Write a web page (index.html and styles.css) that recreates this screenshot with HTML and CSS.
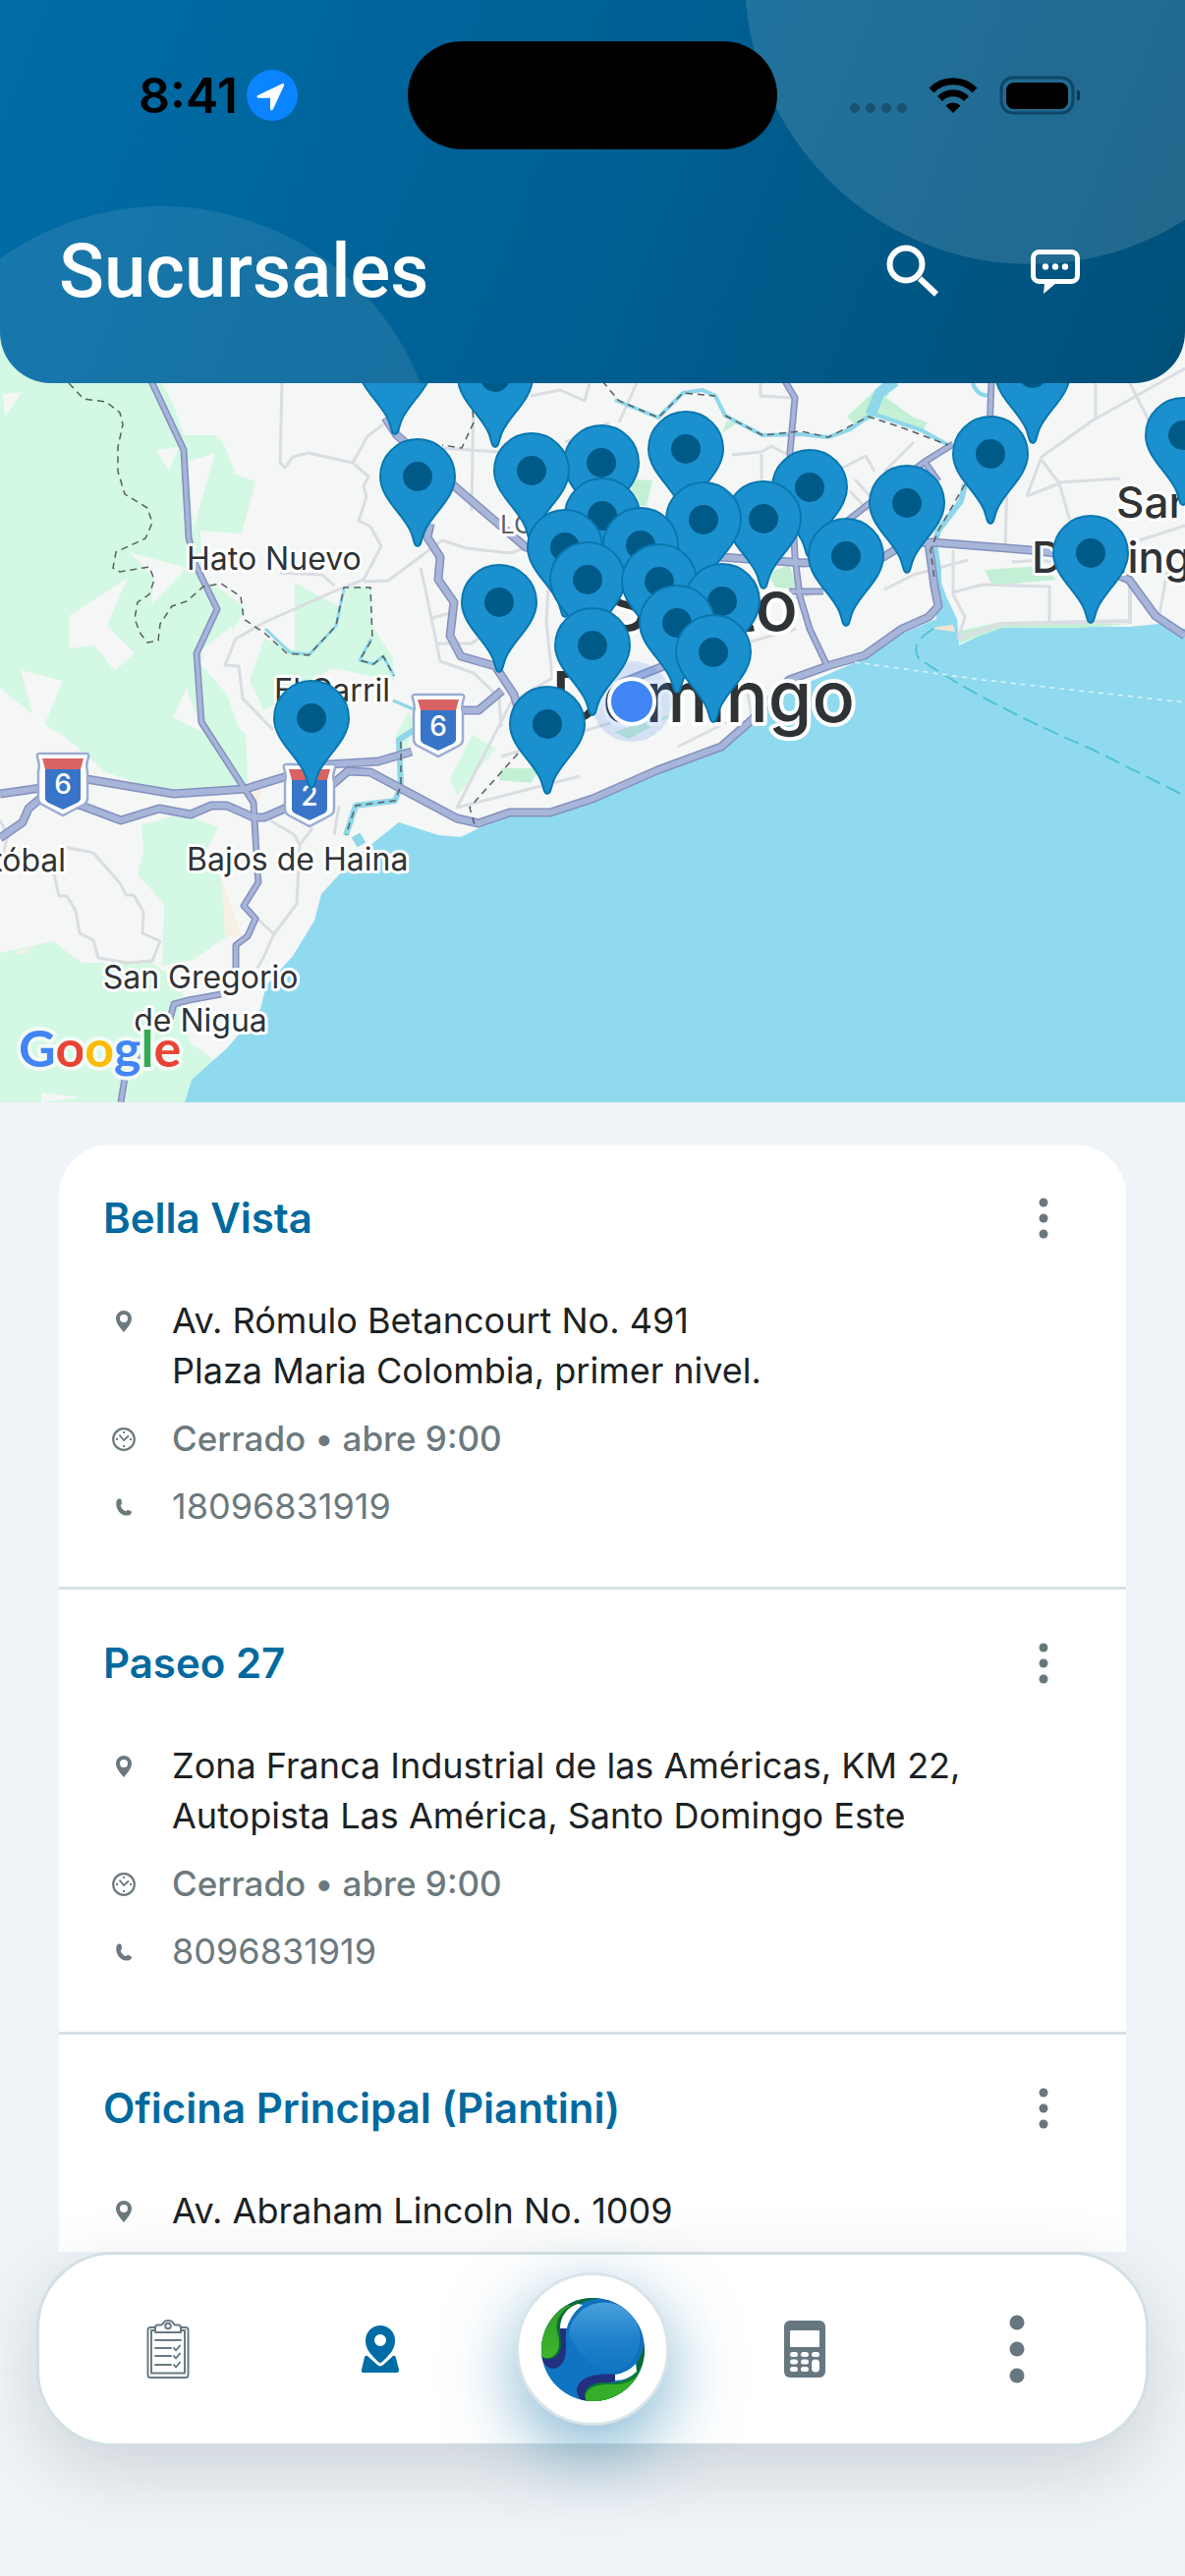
FILE: index.html
```html
<!DOCTYPE html>
<html lang="es">
<head>
<meta charset="utf-8">
<meta name="viewport" content="width=device-width, initial-scale=1">
<title>Sucursales</title>
<link rel="stylesheet" href="styles.css">
</head>
<body>
<svg class="sprite" aria-hidden="true">
  <defs>
    <symbol id="i-pin" viewBox="0 0 16 22"><path fill-rule="evenodd" d="M8 0a8 8 0 0 1 8 8c0 5-4 9-8 14C4 17 0 13 0 8a8 8 0 0 1 8-8zm0 4a4 4 0 1 0 0 8 4 4 0 0 0 0-8z"/></symbol>
    <symbol id="i-clock" viewBox="0 0 24 24"><circle cx="12" cy="12" r="10.8" fill="none" stroke="currentColor" stroke-width="2.2"/><path d="M7.5 7.500l4.500 5.500 5-4.500M12 4v2M12 18v2M4 12h2M18 12h2" fill="none" stroke="currentColor" stroke-width="1.900"/></symbol>
    <symbol id="i-phone" viewBox="0 0 16 18"><path d="M1 2C2 0 5 0 5.500 1.500L6 5C6 6.500 4.500 6.800 4.800 8c1 2.600 2.600 4 4.600 5 1.200.5 1.600-1.200 3-1l2.800 1c1.500 1 .3 3.500-1.700 4.300C9 18.500 4 16 2 12 0 8.500-.3 4.500 1 2z"/></symbol>
    <symbol id="i-more" viewBox="0 0 10 42"><circle cx="5" cy="5" r="4.500"/><circle cx="5" cy="21" r="4.500"/><circle cx="5" cy="37" r="4.500"/></symbol>
    <g id="marker"><path d="M0 71C-4 71-4 62-7 56-15 38-38 22-38 0a38 38 0 0 1 76 0C38 22 15 38 7 56 4 62 4 71 0 71z" fill="#1b90cf" stroke="#0877ae" stroke-width="2"/><circle r="15" fill="#005a88"/></g>
    <g id="shield"><path d="M-24-31h48q3 0 2 4-3 8-1 14V14q0 5-4 7L0 32-21 21q-4-2-4-7v-27q2-6-1-14-1-4 2-4z" fill="#fff" stroke="#9badd3" stroke-width="2.500"/><path d="M-21-26h42l-3 11h-36z" fill="#d96363"/><path d="M-18-15h36v30q0 2-3 4L0 26l-15-7q-3-2-3-4z" fill="#3875c8"/></g>
  </defs>
</svg>

<div class="app">
  <header class="header">
    <svg class="header-art" viewBox="0 0 1206 390" preserveAspectRatio="xMaxYMin slice" aria-hidden="true">
      <circle cx="1050" cy="-23" r="292" fill="#fff" opacity=".13"/>
      <circle cx="165" cy="492" r="282" fill="#fff" opacity=".09"/>
    </svg>
    <div class="status">
      <div class="status-left">
        <span class="time">8:41</span>
        <svg width="52" height="52" viewBox="0 0 52 52" aria-hidden="true"><circle cx="26" cy="26" r="26" fill="#0a84ff"/><path d="M11.500 26L36 14.200q3-1 2 2L27 40q-2 3-3-.5V28.700H12q-3-1-.5-2.700z" fill="#fff"/></svg>
      </div>
      <div class="island"></div>
      <div class="status-right">
        <svg width="236" height="46" viewBox="0 0 236 46" aria-hidden="true">
          <g opacity=".25"><circle cx="7" cy="36" r="5"/><circle cx="23" cy="36" r="5"/><circle cx="39" cy="36" r="5"/><circle cx="55" cy="36" r="5"/></g>
          <path d="M107 41l-7.500-7.500a11 11 0 0 1 15 0z"/>
          <path d="M93.500 26.500a19 19 0 0 1 27 0" fill="none" stroke="#000" stroke-width="7"/>
          <path d="M85 18a31 31 0 0 1 44 0" fill="none" stroke="#000" stroke-width="7"/>
          <rect x="156" y="5" width="73" height="36" rx="12" fill="none" stroke="#0b3c5c" stroke-width="3" opacity=".8"/>
          <rect x="161" y="10" width="63" height="27" rx="8"/>
          <path d="M233 17q4 1.500 4 6t-4 6z" opacity=".5"/>
        </svg>
      </div>
    </div>
    <div class="title-row">
      <h1>Sucursales</h1>
      <div class="actions">
        <button type="button" class="icon-button" aria-label="Buscar">
          <svg width="54" height="54" viewBox="0 0 54 54"><circle cx="20" cy="20" r="16.500" fill="none" stroke="#fff" stroke-width="6"/><path d="M34 34.500l17 16" stroke="#fff" stroke-width="6"/></svg>
        </button>
        <button type="button" class="icon-button" aria-label="Mensajes">
          <svg width="50" height="46" viewBox="0 0 50 46"><rect x="2.500" y="3.500" width="45" height="30" rx="6" fill="none" stroke="#fff" stroke-width="5"/><path d="M14 35h12L13 46z" fill="#fff"/><g fill="#fff"><circle cx="15" cy="18.500" r="3.200"/><circle cx="25" cy="18.500" r="3.200"/><circle cx="35" cy="18.500" r="3.200"/></g></svg>
        </button>
      </div>
    </div>
  </header>

  <section class="map" aria-label="Mapa de sucursales">
    <svg viewBox="0 330 1206 792" role="img" aria-label="Santo Domingo">
      <rect y="330" width="1206" height="792" fill="#f5f6f6"/>
      <g fill="#d3f8e3">
        <path d="M0 330H140L165 390 177 413 187 443H219L227 450 240 483 260 490 246 543 204 540 206 590 225 600 250 620 238 640 232 657 207 668 204 676 231 707 250 760 252 800 215 803 170 808 100 783 50 740 0 700z"/>
        <path d="M144 840L185 828 222 842 208 870 224 892 229 915 231 953 196 977 165 983 167 920 140 890 146 867z"/>
        <path d="M0 970L54 958 83 980H154L185 1000 188 1030 192 1060 219 1080 195 1100 188 1122H0z"/>
        <path d="M300 593L349 620 352 597H377L379 637 400 670 401 693 338 680 269 723 254 693 269 650 300 662z"/>
        <path d="M481 748L504 762 465 810 458 792z"/>
        <path d="M228 740L250 745 252 800 236 790z"/>
        <path d="M416 724L423 740 406 775 408 800 402 750z"/>
      </g>
      <g fill="#f5f6f6">
        <path d="M3 401L22 399 5 425z"/><path d="M159 458L182 455 172 479z"/><path d="M191 470L219 461 197 538z"/>
        <path d="M132 562L190 578 154 616 156 588z"/><path d="M70 627L130 588 109 637 137 665 117 683 96 657 70 660z"/>
        <path d="M21 682L64 693 46 736 80 790 40 760 0 735 34 731z"/><path d="M0 735L60 745 105 783 100 800 0 800z"/><path d="M204 662L236 637 240 720 255 760 231 707z"/><path d="M190 700L176 730 205 745z"/>
        <path d="M42 1112L82 1117 42 1122z"/>
      </g>
      <path d="M225 893L246 953 229 953z" fill="#f5efe4"/><path d="M14 970L34 963 26 971z" fill="#f5efe4"/><path d="M250 810L268 802 258 826z" fill="#f5efe4"/>

      <path d="M188 1122L195 1099 231 1067 265 1027 271 1003 298 973 320 937 327 910 348 887 381 857 406 837 446 850 469 852 487 843 519 831 558 831 603 815 669 786 736 761 768 735 803 702 834 690 880 670 911 647 930 640 953 630 950 560 957 590 963 607 974 630 976 657 1018 637 1064 637 1149 638 1180 635 1206 640V1122z" fill="#90daef"/>
      <g fill="#c3f0d5">
        <path d="M862 424L890 398 900 388H912L902 405 930 425 944 430 940 437 895 425 870 432z"/>
        <path d="M642 488L664 489 658 515 645 515z"/><path d="M782 583L803 575 812 597 790 600z"/><path d="M1002 580L1060 576 1075 590 1010 596z"/><path d="M976 655L978 642 1018 633 1150 635 1100 639 1020 639z"/><path d="M735 440L750 431 740 428z"/>
        <path d="M510 782H550L540 797 508 794z"/><path d="M625 745L690 725 640 752z"/>
      </g>
      <path d="M950 640L972 643 970 636 954 638z" fill="#f6e3d3"/>

      <g fill="none" stroke="#dadde2" stroke-width="3" stroke-linejoin="round">
        <path d="M287 390L285 471 290 476 298 465 314 461 359 471 375 485 370 495 373 506 365 530 377 536 388 556 370 590 340 602 270 633 240 650 229 677 243 678 247 711 278 743"/>
        <path d="M359 471L374 444 390 432"/><path d="M370 592L395 591 410 580 450 550 475 558 520 563 535 557"/>
        <path d="M340 596L328 585 285 583"/><path d="M428 578L433 600 448 673 482 685 508 710 510 740"/>
        <path d="M440 629L465 622M446 655L480 655 500 640M558 600L556 632 562 690 520 715 465 822 590 790"/>
        <path d="M482 400L480 520M430 455L510 460M540 403L570 397 595 408 600 390M575 450L620 430"/>
        <path d="M648 390L630 430M774 390V403L807 405M745 463L775 460 785 454 800 462 850 480 881 464 890 480M775 462V500"/>
        <path d="M1206 375L1112 428 1060 465 1045 505M1115 390V426M1150 390L1175 440M1060 468L1078 492 1089 530M1078 491L1140 487M1045 505L1078 492M1025 490L1023 555M1206 535L1160 550M1190 570L1180 625"/>
        <path d="M970 560V605L982 628 975 650M970 603L1000 595 1068 597V635M1030 572L1060 570 1100 580"/>
        <path d="M900 480L930 450M865 500L884 520M870 488L895 515M900 600L930 585 985 570M805 610L850 598M740 660L810 640M760 700L765 730M740 735L690 760"/>
        <path d="M1150 590L1150 635M975 650L1018 635 1150 632" stroke-width="4"/>
        <path d="M65 862L95 868 123 900 128 911 136 911 146 928 145 950 163 958 155 978 130 980 100 975 95 957 81 950 77 927 68 912 60 912 55 890"/>
        <path d="M275 835L300 850 305 860 318 843M305 860L302 920 278 952 268 975 262 985M262 935L278 950M345 820L340 850"/>
        <path d="M510 770L640 730M0 835L8 850 3 870"/>
      </g>

      <g fill="none" stroke="#8ed7ea" stroke-width="6" stroke-linejoin="round">
        <path d="M626 407L670 425 695 400 715 397 728 403 738 423 776 443 815 442 843 445 865 437 888 421 938 438 965 453" stroke-width="4"/>
        <path d="M886 422L895 400 911 388" stroke-width="11"/>
        <path d="M982 493L978 510 955 540 951 553 955 580 955 610"/>
        <path d="M270 640L295 664 315 666 342 637 350 600M378 650L366 672 380 676 390 668 401 688M400 713L421 722" stroke-width="3"/>
        <path d="M421 743L406 753 408 800 402 815 362 820 352 850"/>
        <path d="M362 850L368 860" stroke-width="10"/>
        <path d="M990 390Q995 405 1010 402" stroke-width="4"/>
      </g>

      <g fill="none" stroke-linejoin="round" stroke="#8590bf">
        <path stroke-width="7" d="M154 388L187 458 192 547 198 573 221 620 200 665 205 735 258 817 262 887 263 898 248 922 260 935 252 953 240 962V987M225 1012L192 1018 177 1022 173 1037M150 1058L127 1097 123 1122"/>
        <path stroke-width="9" d="M0 808L42 802 88 793 177 808 250 803 292 790 335 778 385 775 419 765M469 723L487 723 511 703"/>
        <path stroke-width="9" d="M0 853L23 837 29 823 42 812 83 820 123 835 162 823 194 829 215 820H231L258 832H269L292 822 340 797 354 785 377 786 465 833 487 838 519 827H560L603 813 669 784 734 760 765 733 803 692 845 677 880 667 918 640 945 628 955 617 951 597 945 553"/>
        <path stroke-width="9" d="M392 425L404 443 465 497 535 557 600 575 734 567 818 573 899 567 922 553 949 552 1049 560 1090 565 1149 590 1176 627 1206 647"/>
        <path stroke-width="9" d="M438 533L435 547 448 567 446 590 462 613 458 647 469 668 504 678 523 707 530 730M620 700L688 673"/>
        <path stroke-width="7" d="M799 388L809 405 804 460 809 567 814 607 824 640 841 676M1009 388L1007 440M970 452L941 470 955 490M850 540L884 513 941 470M803 602L838 602"/>
      </g>
      <g fill="none" stroke-linejoin="round" stroke="#a7b5d9">
        <path stroke-width="4" d="M154 388L187 458 192 547 198 573 221 620 200 665 205 735 258 817 262 887 263 898 248 922 260 935 252 953 240 962V987M225 1012L192 1018 177 1022 173 1037M150 1058L127 1097 123 1122"/>
        <path stroke-width="6" d="M0 808L42 802 88 793 177 808 250 803 292 790 335 778 385 775 419 765M469 723L487 723 511 703"/>
        <path stroke-width="6" d="M0 853L23 837 29 823 42 812 83 820 123 835 162 823 194 829 215 820H231L258 832H269L292 822 340 797 354 785 377 786 465 833 487 838 519 827H560L603 813 669 784 734 760 765 733 803 692 845 677 880 667 918 640 945 628 955 617 951 597 945 553"/>
        <path stroke-width="6" d="M392 425L404 443 465 497 535 557 600 575 734 567 818 573 899 567 922 553 949 552 1049 560 1090 565 1149 590 1176 627 1206 647"/>
        <path stroke-width="6" d="M438 533L435 547 448 567 446 590 462 613 458 647 469 668 504 678 523 707 530 730M620 700L688 673"/>
        <path stroke-width="4" d="M799 388L809 405 804 460 809 567 814 607 824 640 841 676M1009 388L1007 440M970 452L941 470 955 490M850 540L884 513 941 470M803 602L838 602"/>
      </g>

      <g fill="none" stroke="#56605f" stroke-width="1.500" stroke-dasharray="7 5">
        <path d="M70 390L85 406 108 409 122 420 125 432 120 455 120 480 127 503 150 517 155 532 148 548 118 562 115 578 122 582 152 577 157 590 152 605 140 613 137 630 143 645 150 654 161 652 163 635 175 617 190 612 207 597 225 594 245 607 248 630 270 645 292 665 314 667 342 637 350 598H377L379 650 366 672 380 676 390 668 401 688"/>
        <path d="M481 418L482 430 470 456 450 453M527 767L478 822 484 843M408 755L408 800 402 815 362 820 352 850"/>
        <path d="M613 388L630 408 670 425 695 400 728 403M738 423L776 443 815 439 843 445 884 424 920 436 965 453M982 493L955 540 947 560 951 590"/>
      </g>
      <path d="M950 640Q925 655 935 670 1000 715 1110 762L1206 810" fill="none" stroke="#4fc3d3" stroke-width="2" stroke-dasharray="16 7"/>
      <path d="M870 674L1000 692 1206 715" fill="none" stroke="#fff" stroke-width="1.500" stroke-dasharray="5 5" opacity=".7"/>

      <g class="place">
        <text x="190" y="580">Hato Nuevo</text>
        <text x="279" y="714">El Carril</text>
        <text x="67" y="887" text-anchor="end">San Cristóbal</text>
        <text x="190" y="886">Bajos de Haina</text>
        <text x="204" y="1006" text-anchor="middle">San Gregorio</text>
        <text x="204" y="1050" text-anchor="middle">de Nigua</text>
      </g>
      <text class="place area" x="509" y="543">LOS</text>
      <g class="place town"><text x="1136" y="527">Santo</text><text x="1050" y="583">Domingo</text></g>
      <g class="place city"><text x="812" y="642" text-anchor="end">Santo</text><text x="561" y="735">Domingo</text></g>

      <g class="road-number">
        <use href="#shield" x="64" y="798"/><text x="64" y="808">6</text>
        <use href="#shield" x="315" y="809"/><text x="315" y="820">2</text>
        <use href="#shield" x="446" y="738"/><text x="446" y="749">6</text>
      </g>

      <circle cx="643" cy="714" r="41" fill="#4285f4" opacity=".18"/>
      <circle cx="643" cy="714" r="23" fill="#4285f4" stroke="#fff" stroke-width="4"/>

      <use href="#marker" x="402" y="371"/><use href="#marker" x="1051" y="380"/><use href="#marker" x="504" y="384"/><use href="#marker" x="1204" y="443"/>
      <use href="#marker" x="698" y="457"/><use href="#marker" x="1008" y="462"/><use href="#marker" x="612" y="471"/><use href="#marker" x="541" y="479"/>
      <use href="#marker" x="425" y="485"/><use href="#marker" x="824" y="496"/><use href="#marker" x="923" y="512"/><use href="#marker" x="613" y="525"/>
      <use href="#marker" x="777" y="528"/><use href="#marker" x="716" y="529"/><use href="#marker" x="652" y="555"/><use href="#marker" x="575" y="557"/>
      <use href="#marker" x="1110" y="563"/><use href="#marker" x="861" y="566"/><use href="#marker" x="598" y="590"/><use href="#marker" x="671" y="592"/>
      <use href="#marker" x="735" y="612"/><use href="#marker" x="508" y="613"/><use href="#marker" x="689" y="634"/><use href="#marker" x="603" y="657"/>
      <use href="#marker" x="726" y="664"/><use href="#marker" x="317" y="731"/><use href="#marker" x="557" y="737"/>

      <text class="brand" x="19" y="1086"><tspan fill="#4285f4">G</tspan><tspan fill="#ea4335">o</tspan><tspan fill="#fbbc05">o</tspan><tspan fill="#4285f4">g</tspan><tspan fill="#34a853">l</tspan><tspan fill="#ea4335">e</tspan></text>
    </svg>
  </section>

  <main class="branches">
    <ul class="card">
      <li class="branch">
        <div class="branch-head"><h2>Bella Vista</h2><button type="button" class="more" aria-label="Opciones de Bella Vista"><svg width="10" height="42"><use href="#i-more"/></svg></button></div>
        <div class="details">
          <div class="row address"><span class="glyph"><svg width="16" height="22"><use href="#i-pin"/></svg></span><p>Av. Rómulo Betancourt No. 491<br>Plaza Maria Colombia, primer nivel.</p></div>
          <div class="row hours"><span class="glyph"><svg width="24" height="24"><use href="#i-clock"/></svg></span><p>Cerrado • abre 9:00</p></div>
          <div class="row"><span class="glyph"><svg width="16" height="18"><use href="#i-phone"/></svg></span><a href="tel:18096831919">18096831919</a></div>
        </div>
      </li>
      <li class="branch">
        <div class="branch-head"><h2>Paseo 27</h2><button type="button" class="more" aria-label="Opciones de Paseo 27"><svg width="10" height="42"><use href="#i-more"/></svg></button></div>
        <div class="details">
          <div class="row address"><span class="glyph"><svg width="16" height="22"><use href="#i-pin"/></svg></span><p>Zona Franca Industrial de las Américas, KM 22,<br>Autopista Las América, Santo Domingo Este</p></div>
          <div class="row hours"><span class="glyph"><svg width="24" height="24"><use href="#i-clock"/></svg></span><p>Cerrado • abre 9:00</p></div>
          <div class="row"><span class="glyph"><svg width="16" height="18"><use href="#i-phone"/></svg></span><a href="tel:8096831919">8096831919</a></div>
        </div>
      </li>
      <li class="branch">
        <div class="branch-head"><h2>Oficina Principal (Piantini)</h2><button type="button" class="more" aria-label="Opciones de Oficina Principal"><svg width="10" height="42"><use href="#i-more"/></svg></button></div>
        <div class="details">
          <div class="row address"><span class="glyph"><svg width="16" height="22"><use href="#i-pin"/></svg></span><p>Av. Abraham Lincoln No. 1009</p></div>
        </div>
      </li>
    </ul>
  </main>

  <nav class="tabs" aria-label="Principal">
    <a href="#solicitudes" aria-label="Solicitudes">
      <svg width="44" height="60" viewBox="0 0 44 60" fill="none" stroke="#697a82" stroke-width="2" stroke-linejoin="round" stroke-linecap="round"><path d="M9 8H4Q1.500 8 1.500 10.500V56Q1.500 59 4 59H40Q42.500 59 42.500 56V10.500Q42.500 8 40 8H35"/><path d="M9 11H5V54.500H39V11H35"/><path d="M9 13V8Q9 5.500 12 5.500H15Q17 5 17.500 3 18.500 1 22 1T27 3Q28 5 29 5.500H32Q35 5.500 35 8V13z"/><circle cx="22" cy="6.500" r="2.800"/><path d="M9 21H35M9 29H25M9 37H25M9 46H25M28 29l2 2.500 4-5M28 37l2 2.500 4-5M28 46l2 2.500 4-5"/></svg>
    </a>
    <a href="#sucursales" aria-label="Sucursales" aria-current="page">
      <svg width="38" height="48" viewBox="0 0 38 48" fill="#006ca5"><path fill-rule="evenodd" d="M19 0a15 15 0 0 1 15 16c0 9-7 15-13 21q-2 2-4 0C11 31 4 25 4 16A15 15 0 0 1 19 0zm0 9a6 6 0 1 0 0 12 6 6 0 0 0 0-12z"/><path d="M4 31Q6 30 7 32l9 8q3 2.500 6 0l9-8q1-2 3-1l1 2 3 12q0 3-2 3H2q-3 0-2-3L3 32z"/></svg>
    </a>
    <a href="#inicio" class="home" aria-label="Inicio">
      <svg width="105" height="105" viewBox="0 0 105 105">
        <defs>
          <clipPath id="ball"><circle cx="52.500" cy="52.500" r="52.500"/></clipPath>
          <linearGradient id="sea" x2="0" y2="1"><stop offset="0" stop-color="#4ba3dc"/><stop offset=".5" stop-color="#2181cb"/><stop offset="1" stop-color="#0f74c2"/></linearGradient>
          <linearGradient id="leaf" x2="0" y2="1"><stop offset="0" stop-color="#2b9a2b"/><stop offset="1" stop-color="#3fb52b"/></linearGradient>
        </defs>
        <g clip-path="url(#ball)">
          <rect width="105" height="105" fill="#0f74c2"/>
          <path d="M0 60C4 78 26 76 25 50V31H17V50z" fill="#23307f"/>
          <path d="M70 0C54 0 44 3 36 8 24 14 19 22 19 32L20 48C20 60 8 66 0 60V0H70z" fill="#0c6a35"/>
          <path d="M37 6C25 10 19 20 19 31H28C28 22 33 14 42 7z" fill="#fff"/>
          <path d="M30 8C18 15 14 24 16 34 20 46 18 56 11 60Q4 63 0 59V0z" fill="url(#leaf)"/>
          <circle cx="64" cy="41" r="38" fill="url(#sea)" stroke="#0f70bd" stroke-width="3"/>
          <path d="M25 31V56Q32 76 60 80L75 79Q40 68 25 31z" fill="#0f74c2"/>
          <path d="M105 46Q102 58 97 66 98 74 92 80L70 92 46 105H105z" fill="#0c6a35"/>
          <path d="M75 78C52 76 36 82 36 95Q37 102 42 105L48 105 50 90 75 85z" fill="#23307f"/>
          <path d="M75 78Q88 76 96 67L97 75Q88 84 75 84z" fill="#fff"/>
          <path d="M101 71C88 86 76 87 62 86 48 87 40 96 46 105H100z" fill="#0c7a35"/>
          <path d="M101 77C86 90 76 88 64 88 50 89 42 96 46 105H100z" fill="#35ae2a"/>
        </g>
      </svg>
    </a>
    <a href="#calculadora" aria-label="Calculadora">
      <svg width="42" height="58" viewBox="0 0 42 58"><rect width="42" height="58" rx="6" fill="#667780"/><g fill="#fff"><rect x="6" y="10" width="30" height="17" rx="1"/><rect x="6" y="32" width="8" height="5" rx="2.500"/><rect x="17" y="32" width="8" height="5" rx="2.500"/><rect x="28" y="32" width="8" height="5" rx="2.500"/><rect x="6" y="39.500" width="8" height="5" rx="2.500"/><rect x="17" y="39.500" width="8" height="5" rx="2.500"/><rect x="6" y="47" width="8" height="5" rx="2.500"/><rect x="17" y="47" width="8" height="5" rx="2.500"/><rect x="28" y="39.500" width="8" height="13" rx="4"/></g></svg>
    </a>
    <button type="button" aria-label="Más opciones">
      <svg width="16" height="70" viewBox="0 0 16 70" fill="#667780"><circle cx="8" cy="8" r="7.500"/><circle cx="8" cy="35" r="7.500"/><circle cx="8" cy="62" r="7.500"/></svg>
    </button>
  </nav>
</div>
</body>
</html>
```
FILE: styles.css
```css
* {
  box-sizing: border-box;
}

body {
  margin: 0;
  background: #f0f4f8;
  font-family: Inter, "Liberation Sans", sans-serif;
  color: #1c2224;
}

h1, h2, p, ul {
  margin: 0;
  padding: 0;
}

svg {
  display: block;
}

button {
  border: 0;
  padding: 0;
  background: none;
  color: inherit;
  font: inherit;
  cursor: pointer;
}

a {
  color: inherit;
  text-decoration: none;
}

.sprite {
  position: absolute;
  width: 0;
  height: 0;
}

.app {
  display: flex;
  flex-direction: column;
  height: 100vh;
}

/* Header */

.header {
  position: relative;
  z-index: 1;
  flex: none;
  padding: 42px 0 74px;
  overflow: hidden;
  border-radius: 0 0 52px 52px;
  background: linear-gradient(112deg, #006da9 0%, #005f92 52%, #005079 100%);
}

.header-art {
  position: absolute;
  inset: 0;
  width: 100%;
  height: 100%;
}

.status,
.title-row {
  position: relative;
}

.status {
  display: grid;
  grid-template-columns: 1fr 376px 1fr;
  align-items: center;
}

.status-left {
  display: flex;
  align-items: center;
  gap: 9px;
  padding-left: 141px;
}

.time {
  font-size: 50px;
  font-weight: 600;
  line-height: 60px;
  color: #000;
}

.island {
  height: 110px;
  border-radius: 55px;
  background: #000;
}

.status-right {
  display: flex;
  justify-content: flex-end;
  padding-right: 107px;
}

.title-row {
  display: flex;
  align-items: center;
  justify-content: space-between;
  margin-top: 84px;
  padding: 0 92px 0 60px;
}

h1 {
  font-family: Roboto, sans-serif;
  font-size: 76px;
  font-weight: 500;
  line-height: 80px;
  color: #fff;
}

.actions {
  display: flex;
  gap: 65px;
}

.icon-button {
  display: grid;
  place-items: center;
  width: 80px;
  height: 80px;
}

/* Map */

.map {
  flex: none;
  margin-top: -60px;
}

.map svg {
  width: 100%;
  height: auto;
}

.place {
  fill: #303336;
  stroke: #fff;
  stroke-width: 6px;
  stroke-linejoin: round;
  paint-order: stroke;
  font-size: 32px;
}

.area {
  font-size: 26px;
  fill: #5f6368;
}

.town {
  font-size: 44px;
  font-weight: 500;
}

.city {
  font-size: 72px;
  font-weight: 500;
  stroke-width: 8px;
}

.road-number {
  font-size: 28px;
  font-weight: 500;
  fill: #fff;
  text-anchor: middle;
}

.brand {
  font: 700 52px Lato, sans-serif;
  stroke: #f2fbf7;
  stroke-width: 8px;
  stroke-linejoin: round;
  paint-order: stroke;
}

/* Branch list */

.branches {
  flex: 1;
  min-height: 0;
  overflow: hidden;
  padding: 43px 60px 0;
}

.card {
  list-style: none;
  border-radius: 52px 52px 0 0;
  background: #fff;
}

.branch {
  padding: 50px 59px 56px 45px;
  border-bottom: 3px solid #d5e1e4;
}

.branch-head {
  display: flex;
  align-items: center;
  justify-content: space-between;
}

h2 {
  font-size: 42px;
  font-weight: 600;
  line-height: 50px;
  color: #006a9f;
}

.more {
  display: grid;
  place-items: center;
  width: 50px;
  height: 50px;
  fill: #69777c;
}

.details {
  display: flex;
  flex-direction: column;
  gap: 18px;
  margin-top: 54px;
  font-size: 36px;
  line-height: 51px;
  color: #6c797e;
}

.row {
  display: flex;
  gap: 28px;
}

.address p {
  color: #1c2224;
}

.hours {
  font-size: 35px;
  font-weight: 500;
}

.glyph {
  display: grid;
  place-items: center;
  flex: none;
  width: 42px;
  height: 51px;
  fill: currentColor;
}

/* Bottom bar */

.tabs {
  position: relative;
  display: grid;
  grid-template-columns: repeat(5, 1fr);
  flex: none;
  height: 198px;
  margin: 0 37px 132px;
  padding: 0 23px;
  border: 3px solid #d3e0e3;
  border-radius: 78px;
  background: #fff;
  box-shadow: 0 24px 72px rgba(60, 80, 90, 0.2);
}

.tabs > * {
  display: grid;
  place-items: center;
  place-self: center;
  width: 156px;
  height: 156px;
}

.tabs .home {
  border: 3px solid #d9e4e8;
  border-radius: 50%;
  background: #fff;
  box-shadow: 0 24px 72px rgba(0, 108, 166, 0.5);
}
```
